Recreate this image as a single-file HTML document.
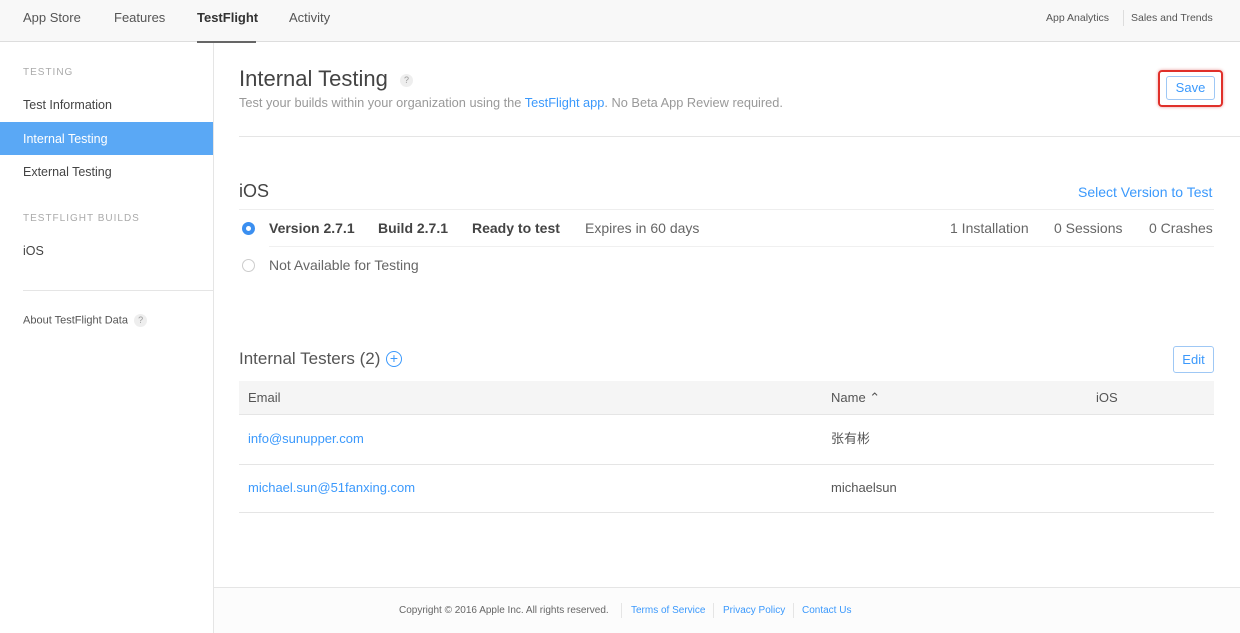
<!DOCTYPE html>
<html><head><meta charset="utf-8"><style>
*{margin:0;padding:0;box-sizing:border-box}
body{width:1240px;height:633px;overflow:hidden;background:#fff;font-family:"Liberation Sans","Noto Sans CJK SC",sans-serif;color:#333;position:relative}
.a{position:absolute;white-space:nowrap;line-height:1.15}
.blue{color:#3b99fc}
.q{display:inline-block;width:13px;height:13px;border-radius:50%;background:#eee;color:#999;font-size:9px;text-align:center;line-height:13px;vertical-align:middle}
</style></head><body>
<div class="a" style="left:0;top:0;width:1240px;height:42px;background:#f8f8f8;border-bottom:1px solid #ddd"></div>
<div class="a" style="left:23px;top:11px;font-size:13px;color:#555">App Store</div>
<div class="a" style="left:114px;top:11px;font-size:13px;color:#555">Features</div>
<div class="a" style="left:197px;top:11px;font-size:13px;font-weight:bold;color:#333">TestFlight</div>
<div class="a" style="left:197px;top:41px;width:59px;height:2px;background:#666"></div>
<div class="a" style="left:289px;top:11px;font-size:13px;color:#555">Activity</div>
<div class="a" style="left:1046px;top:12px;font-size:10.5px;color:#555">App Analytics</div>
<div class="a" style="left:1123px;top:10px;width:1px;height:16px;background:#ddd"></div>
<div class="a" style="left:1131px;top:12px;font-size:10.5px;color:#555">Sales and Trends</div>

<div class="a" style="left:213px;top:43px;width:1px;height:590px;background:#e5e5e5"></div>
<div class="a" style="left:23px;top:67px;font-size:10px;color:#aaa;letter-spacing:1px">TESTING</div>
<div class="a" style="left:23px;top:98px;font-size:12.5px;color:#444">Test Information</div>
<div class="a" style="left:0;top:122px;width:213px;height:33px;background:#5aa8f5"></div>
<div class="a" style="left:23px;top:132px;font-size:12.5px;color:#fff">Internal Testing</div>
<div class="a" style="left:23px;top:165px;font-size:12.5px;color:#444">External Testing</div>
<div class="a" style="left:23px;top:213px;font-size:10px;color:#aaa;letter-spacing:1px">TESTFLIGHT BUILDS</div>
<div class="a" style="left:23px;top:244px;font-size:12.5px;color:#444">iOS</div>
<div class="a" style="left:23px;top:290px;width:190px;height:1px;background:#e5e5e5"></div>
<div class="a" style="left:23px;top:314px;font-size:11px;color:#555">About TestFlight Data &nbsp;<span class="q">?</span></div>

<div class="a" style="left:239px;top:66px;font-size:22px;color:#444">Internal Testing &nbsp;<span class="q">?</span></div>
<div class="a" style="left:239px;top:96px;font-size:12.8px;color:#999">Test your builds within your organization using the <span class="blue">TestFlight app</span>. No Beta App Review required.</div>
<div class="a" style="left:1158px;top:70px;width:65px;height:37px;border:2px solid #e0302a;border-radius:4px;box-shadow:0 0 3px rgba(200,0,0,.4)"></div>
<div class="a" style="left:1166px;top:76px;width:49px;height:24px;border:1px solid #9fc8f5;border-radius:3px;font-size:13px;text-align:center;line-height:22px;color:#3b99fc">Save</div>
<div class="a" style="left:239px;top:136px;width:1001px;height:1px;background:#e5e5e5"></div>

<div class="a" style="left:239px;top:181px;font-size:18px;color:#444">iOS</div>
<div class="a" style="left:1078px;top:184px;font-size:14px;color:#3b99fc">Select Version to Test</div>
<div class="a" style="left:239px;top:209px;width:975px;height:1px;background:#eee"></div>
<div class="a" style="left:242px;top:222px;width:13px;height:13px;border-radius:50%;background:#3b8ff0;border:1px solid #3b8ff0"><div style="margin:3px;width:5px;height:5px;border-radius:50%;background:#fff"></div></div>
<div class="a" style="left:269px;top:220px;font-size:14px;font-weight:bold;color:#444">Version 2.7.1</div>
<div class="a" style="left:378px;top:220px;font-size:14px;font-weight:bold;color:#444">Build 2.7.1</div>
<div class="a" style="left:472px;top:220px;font-size:14px;font-weight:bold;color:#444">Ready to test</div>
<div class="a" style="left:585px;top:220px;font-size:14px;color:#666">Expires in 60 days</div>
<div class="a" style="left:950px;top:220px;font-size:14px;color:#666">1 Installation</div>
<div class="a" style="left:1054px;top:220px;font-size:14px;color:#666">0 Sessions</div>
<div class="a" style="left:1149px;top:220px;font-size:14px;color:#666">0 Crashes</div>
<div class="a" style="left:269px;top:246px;width:945px;height:1px;background:#f0f0f0"></div>
<div class="a" style="left:242px;top:259px;width:13px;height:13px;border-radius:50%;border:1px solid #ccc"></div>
<div class="a" style="left:269px;top:257px;font-size:14px;color:#666">Not Available for Testing</div>

<div class="a" style="left:239px;top:349px;font-size:17px;color:#555">Internal Testers (2)</div>
<div class="a" style="left:386px;top:351px;width:16px;height:16px;border-radius:50%;border:1.5px solid #3b99fc;color:#3b99fc;font-size:14px;line-height:12px;text-align:center">+</div>
<div class="a" style="left:1173px;top:346px;width:41px;height:27px;border:1px solid #9fc8f5;border-radius:3px;font-size:13px;text-align:center;line-height:25px;color:#3b99fc">Edit</div>
<div class="a" style="left:239px;top:381px;width:975px;height:34px;background:#f5f5f5;border-bottom:1px solid #e5e5e5"></div>
<div class="a" style="left:248px;top:391px;font-size:13px;color:#555">Email</div>
<div class="a" style="left:831px;top:391px;font-size:13px;color:#555">Name ⌃</div>
<div class="a" style="left:1096px;top:391px;font-size:13px;color:#555">iOS</div>
<div class="a" style="left:248px;top:432px;font-size:13px;color:#3b99fc">info@sunupper.com</div>
<div class="a" style="left:831px;top:431px;font-size:13px;color:#555;line-height:16px">张有彬</div>
<div class="a" style="left:239px;top:464px;width:975px;height:1px;background:#e5e5e5"></div>
<div class="a" style="left:248px;top:481px;font-size:13px;color:#3b99fc">michael.sun@51fanxing.com</div>
<div class="a" style="left:831px;top:481px;font-size:13px;color:#555">michaelsun</div>
<div class="a" style="left:239px;top:512px;width:975px;height:1px;background:#e5e5e5"></div>

<div class="a" style="left:214px;top:587px;width:1026px;height:1px;background:#e5e5e5"></div>
<div class="a" style="left:214px;top:588px;width:1026px;height:45px;background:#fcfcfc"></div>
<div class="a" style="left:399px;top:605px;font-size:10px;color:#666">Copyright © 2016 Apple Inc. All rights reserved.</div>
<div class="a" style="left:621px;top:603px;width:1px;height:15px;background:#e5e5e5"></div>
<div class="a" style="left:631px;top:605px;font-size:10px;color:#3b99fc">Terms of Service</div>
<div class="a" style="left:713px;top:603px;width:1px;height:15px;background:#e5e5e5"></div>
<div class="a" style="left:723px;top:605px;font-size:10px;color:#3b99fc">Privacy Policy</div>
<div class="a" style="left:793px;top:603px;width:1px;height:15px;background:#e5e5e5"></div>
<div class="a" style="left:802px;top:605px;font-size:10px;color:#3b99fc">Contact Us</div>
</body></html>
